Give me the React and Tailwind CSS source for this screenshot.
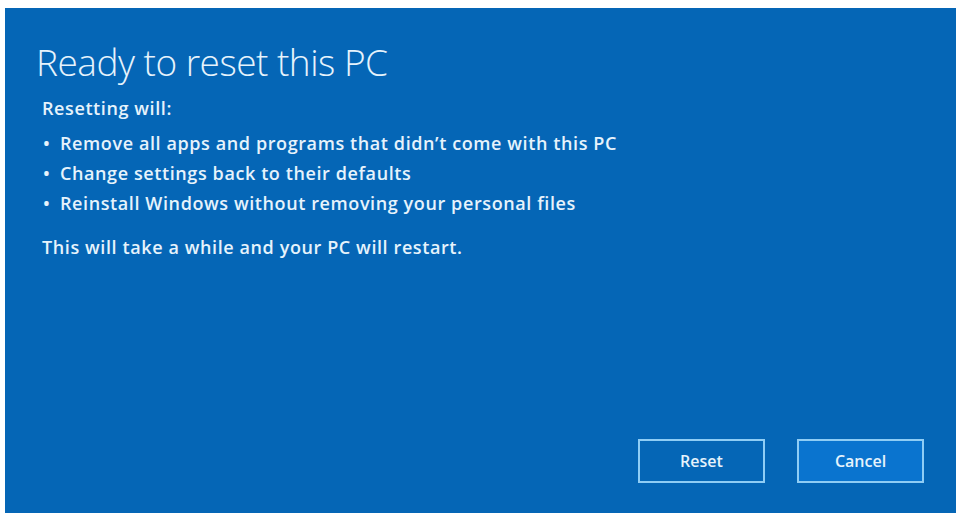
export default function App() {
    const items = [
        "Remove all apps and programs that didn’t come with this PC",
        "Change settings back to their defaults",
        "Reinstall Windows without removing your personal files",
    ];

    return (
        <div className="h-[515px] w-[959px] bg-white pl-[5px] pt-[8px] font-['Open_Sans',sans-serif]">
            <div className="flex h-[505px] w-[951px] flex-col bg-[#0566b6] text-[#e6f3fc]">
                {/* Heading */}
                <h1 className="ml-[31px] mt-[30px] text-[37px] font-light leading-[48px] tracking-[-0.5px]">
                    Ready to reset this PC
                </h1>

                {/* Body */}
                <div className="ml-[37px] mt-[7px] text-[18px] font-semibold tracking-[0.6px]">
                    <p className="mb-[5px] leading-[30px]">Resetting will:</p>
                    <ul>
                        {items.map((item) => (
                            <li key={item} className="flex leading-[30px]">
                                <span className="w-[18px] pl-[1px]">•</span>
                                <span>{item}</span>
                            </li>
                        ))}
                    </ul>
                    <p className="mt-[14px] leading-[30px]">This will take a while and your PC will restart.</p>
                </div>

                {/* Footer */}
                <div className="mt-auto flex justify-end gap-[32px] pb-[30px] pr-[32px]">
                    <button className="h-[44px] w-[127px] border-2 border-[#8fcdf5] bg-[#0566b6] text-[16px] font-semibold text-[#e6f3fc]">
                        Reset
                    </button>
                    <button className="h-[44px] w-[127px] border-2 border-[#8fcdf5] bg-[#0a74cf] text-[16px] font-semibold text-[#e6f3fc]">
                        Cancel
                    </button>
                </div>
            </div>
        </div>
    );
}
